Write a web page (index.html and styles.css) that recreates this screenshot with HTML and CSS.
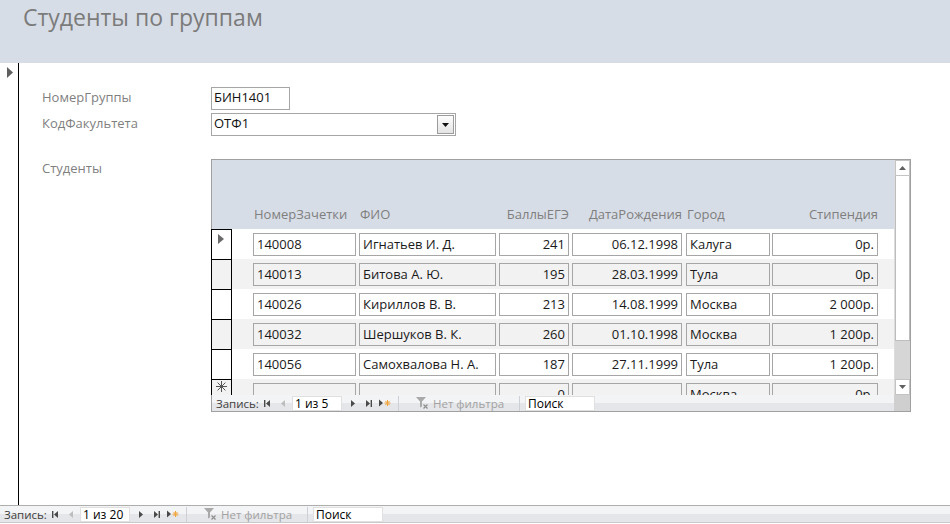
FILE: index.html
```html
<!DOCTYPE html>
<html lang="ru">
<head>
  <meta charset="UTF-8" />
  <title>Студенты по группам</title>
  <link rel="stylesheet" href="styles.css">
</head>
<body>
  <header class="form-header">
    <h1>Студенты по группам</h1>
  </header>

  <div class="form-body">
    <div class="record-selector">
      <svg class="current-mark" width="6" height="11" viewBox="0 0 6 11"><path d="M0 0L6 5.5L0 11Z" fill="#5f5f5f"/></svg>
    </div>

    <div class="detail">
      <div class="field-row">
        <label class="field-label">НомерГруппы</label>
        <div class="textbox group-box">БИН1401</div>
      </div>
      <div class="field-row row-gap">
        <label class="field-label">КодФакультета</label>
        <div class="textbox combo">
          <span>ОТФ1</span>
          <span class="combo-btn">
            <svg width="7" height="4" viewBox="0 0 7 4"><path d="M0 0H7L3.5 4Z" fill="#111"/></svg>
          </span>
        </div>
      </div>

      <div class="field-row subform-row">
        <label class="field-label">Студенты</label>

        <div class="subform">
          <div class="sheet">
            <div class="sheet-head">
              <div class="c-num">НомерЗачетки</div>
              <div class="c-fio">ФИО</div>
              <div class="c-ball right">БаллыЕГЭ</div>
              <div class="c-date right">ДатаРождения</div>
              <div class="c-city">Город</div>
              <div class="c-stip right">Стипендия</div>
            </div>

            <div class="sheet-row">
              <div class="rowsel">
                <svg width="6" height="10" viewBox="0 0 6 10"><path d="M0 0L6 5L0 10Z" fill="#6a6a6a"/></svg>
              </div>
              <div class="cell c-num">140008</div>
              <div class="cell c-fio">Игнатьев И. Д.</div>
              <div class="cell c-ball right">241</div>
              <div class="cell c-date right">06.12.1998</div>
              <div class="cell c-city">Калуга</div>
              <div class="cell c-stip right">0р.</div>
            </div>
            <div class="sheet-row alt">
              <div class="rowsel"></div>
              <div class="cell c-num">140013</div>
              <div class="cell c-fio">Битова А. Ю.</div>
              <div class="cell c-ball right">195</div>
              <div class="cell c-date right">28.03.1999</div>
              <div class="cell c-city">Тула</div>
              <div class="cell c-stip right">0р.</div>
            </div>
            <div class="sheet-row">
              <div class="rowsel"></div>
              <div class="cell c-num">140026</div>
              <div class="cell c-fio">Кириллов В. В.</div>
              <div class="cell c-ball right">213</div>
              <div class="cell c-date right">14.08.1999</div>
              <div class="cell c-city">Москва</div>
              <div class="cell c-stip right">2 000р.</div>
            </div>
            <div class="sheet-row alt">
              <div class="rowsel"></div>
              <div class="cell c-num">140032</div>
              <div class="cell c-fio">Шершуков В. К.</div>
              <div class="cell c-ball right">260</div>
              <div class="cell c-date right">01.10.1998</div>
              <div class="cell c-city">Москва</div>
              <div class="cell c-stip right">1 200р.</div>
            </div>
            <div class="sheet-row">
              <div class="rowsel"></div>
              <div class="cell c-num">140056</div>
              <div class="cell c-fio">Самохвалова Н. А.</div>
              <div class="cell c-ball right">187</div>
              <div class="cell c-date right">27.11.1999</div>
              <div class="cell c-city">Тула</div>
              <div class="cell c-stip right">1 200р.</div>
            </div>
            <!-- new record row, cut by the subform edge -->
            <div class="sheet-row alt">
              <div class="rowsel new-rec">
                <svg width="11" height="11" viewBox="0 0 11 11"><path d="M5.5 0V11M0 5.5H11M1.6 1.6L9.4 9.4M9.4 1.6L1.6 9.4" stroke="#555" stroke-width="1"/></svg>
              </div>
              <div class="cell c-num"></div>
              <div class="cell c-fio"></div>
              <div class="cell c-ball right">0</div>
              <div class="cell c-date right"></div>
              <div class="cell c-city">Москва</div>
              <div class="cell c-stip right">0р.</div>
            </div>
          </div>

          <div class="vscroll">
            <div class="scroll-btn">
              <svg width="7" height="4" viewBox="0 0 7 4"><path d="M0 4H7L3.5 0Z" fill="#606060"/></svg>
            </div>
            <div class="scroll-thumb"></div>
            <div class="scroll-track"></div>
            <div class="scroll-btn">
              <svg width="7" height="4" viewBox="0 0 7 4"><path d="M0 0H7L3.5 4Z" fill="#606060"/></svg>
            </div>
          </div>

          <div class="recnav sub-nav">
            <span class="nav-label">Запись:</span>
            <span class="nav-btn"><svg width="6" height="7" viewBox="0 0 6 7"><rect width="1.4" height="7" fill="#4a4a4a"/><path d="M6 0V7L2 3.5Z" fill="#4a4a4a"/></svg></span>
            <span class="nav-btn"><svg width="4" height="7" viewBox="0 0 4 7"><path d="M4 0V7L0 3.5Z" fill="#bdbdbd"/></svg></span>
            <span class="nav-box pos-box">1 из 5</span>
            <span class="nav-btn"><svg width="4" height="7" viewBox="0 0 4 7"><path d="M0 0V7L4 3.5Z" fill="#4a4a4a"/></svg></span>
            <span class="nav-btn"><svg width="6" height="7" viewBox="0 0 6 7"><path d="M0 0V7L4 3.5Z" fill="#4a4a4a"/><rect x="4.6" width="1.4" height="7" fill="#4a4a4a"/></svg></span>
            <span class="nav-btn"><svg width="12" height="8" viewBox="0 0 12 8"><path d="M0 0.5V7.5L4 4Z" fill="#4a4a4a"/><path d="M8.5 1V7M5.5 4H11.5M6.4 1.9L10.6 6.1M10.6 1.9L6.4 6.1" stroke="#f2a33a" stroke-width="1"/></svg></span>
            <span class="nav-sep"></span>
            <span class="nav-filter">
              <svg width="13" height="12" viewBox="0 0 13 12"><path d="M0 0H10L6 4.5V9.5L4 10.5V4.5Z" fill="#a9a9a9"/><path d="M7.5 7.5L11.5 11.5M11.5 7.5L7.5 11.5" stroke="#8f8f8f" stroke-width="1.2"/></svg>
              Нет фильтра
            </span>
            <span class="nav-sep"></span>
            <span class="nav-box search-box">Поиск</span>
          </div>
          <div class="corner"></div>
        </div>
      </div>
    </div>
  </div>

  <div class="recnav main-nav">
    <span class="nav-label">Запись:</span>
    <span class="nav-btn"><svg width="6" height="7" viewBox="0 0 6 7"><rect width="1.4" height="7" fill="#4a4a4a"/><path d="M6 0V7L2 3.5Z" fill="#4a4a4a"/></svg></span>
    <span class="nav-btn"><svg width="4" height="7" viewBox="0 0 4 7"><path d="M4 0V7L0 3.5Z" fill="#bdbdbd"/></svg></span>
    <span class="nav-box pos-box">1 из 20</span>
    <span class="nav-btn"><svg width="4" height="7" viewBox="0 0 4 7"><path d="M0 0V7L4 3.5Z" fill="#4a4a4a"/></svg></span>
    <span class="nav-btn"><svg width="6" height="7" viewBox="0 0 6 7"><path d="M0 0V7L4 3.5Z" fill="#4a4a4a"/><rect x="4.6" width="1.4" height="7" fill="#4a4a4a"/></svg></span>
    <span class="nav-btn"><svg width="12" height="8" viewBox="0 0 12 8"><path d="M0 0.5V7.5L4 4Z" fill="#4a4a4a"/><path d="M8.5 1V7M5.5 4H11.5M6.4 1.9L10.6 6.1M10.6 1.9L6.4 6.1" stroke="#f2a33a" stroke-width="1"/></svg></span>
    <span class="nav-sep"></span>
    <span class="nav-filter">
      <svg width="13" height="12" viewBox="0 0 13 12"><path d="M0 0H10L6 4.5V9.5L4 10.5V4.5Z" fill="#a9a9a9"/><path d="M7.5 7.5L11.5 11.5M11.5 7.5L7.5 11.5" stroke="#8f8f8f" stroke-width="1.2"/></svg>
      Нет фильтра
    </span>
    <span class="nav-sep"></span>
    <span class="nav-box search-box">Поиск</span>
  </div>
</body>
</html>
```

FILE: styles.css
```css
* {
  margin: 0;
  padding: 0;
  box-sizing: border-box;
}

body {
  width: 950px;
  height: 524px;
  overflow: hidden;
  display: flex;
  flex-direction: column;
  font-family: "Open Sans", "Noto Sans", sans-serif;
  font-size: 13px;
  color: #222;
  background: #fff;
}

/* form header band */
.form-header {
  height: 63px;
  flex: none;
  background-color: #d7dde6;
  padding: 1px 0 0 23px;
}
.form-header h1 {
  font-size: 23px;
  font-weight: 400;
  color: #7b7b7b;
}

.form-body {
  flex: 1;
  display: flex;
  min-height: 0;
}

.record-selector {
  width: 19px;
  flex: none;
  border-right: 1px solid #000;
}
.current-mark {
  display: block;
  margin: 4px 0 0 7px;
}

.detail {
  flex: 1;
  padding: 24px 0 0 23px;
}

.field-row {
  display: flex;
  align-items: center;
}
.row-gap {
  margin-top: 3px;
}
.field-label {
  width: 169px;
  flex: none;
  color: #7f7f7f;
  padding-bottom: 3px;
}

.textbox {
  height: 23px;
  border: 1px solid #a6a6a6;
  padding-left: 2px;
  line-height: 19px;
  color: #111;
  background: #fff;
}
.group-box {
  width: 79px;
}
.combo {
  width: 245px;
  display: flex;
  justify-content: space-between;
  padding-right: 1px;
}
.combo-btn {
  width: 17px;
  height: 19px;
  margin-top: 1px;
  border: 1px solid #9c9c9c;
  background: linear-gradient(#fdfdfd, #e4e4e4);
  display: flex;
  align-items: center;
  justify-content: center;
}

/* subform */
.subform-row {
  align-items: flex-start;
  margin-top: 23px;
}
.subform-row .field-label {
  padding-top: 0;
}

.subform {
  width: 700px;
  height: 253px;
  border: 1px solid #a0a0a0;
  border-left: none;
  display: grid;
  grid-template-columns: 683px 16px;
  grid-template-rows: 235px 16px;
}

.sheet {
  overflow: hidden;
}
.sheet-head {
  height: 69px;
  background-color: #d7dde6;
  border-left: 1px solid #a0a0a0;
  display: flex;
  align-items: flex-end;
  padding: 0 0 6px 20px;
  color: #7f7f7f;
  line-height: 18px;
}
.sheet-head > div {
  flex: none;
  padding: 0 1px;
}
.sheet-head .right {
  padding-right: 0;
}

.sheet-row {
  height: 30px;
  display: flex;
  align-items: flex-start;
  background: #fff;
}
.sheet-row.alt {
  background: #f2f2f2;
}
.rowsel {
  width: 21px;
  height: 30px;
  flex: none;
  border: 1px solid #000;
  border-bottom: none;
  padding: 4px 0 0 6px;
}
.rowsel svg {
  display: block;
}
.rowsel.new-rec {
  padding: 1px 0 0 4px;
}

.cell {
  height: 23px;
  margin-top: 4px;
  border: 1px solid #a6a6a6;
  padding: 0 3px;
  line-height: 20px;
  white-space: nowrap;
  overflow: hidden;
  color: #1a1a1a;
}
.right {
  text-align: right;
}

.c-num { width: 103px; margin-left: 21px; }
.c-fio { width: 137px; margin-left: 3px; }
.c-ball { width: 70px; margin-left: 3px; }
.c-date { width: 110px; margin-left: 3px; }
.c-city { width: 84px; margin-left: 4px; }
.c-stip { width: 106px; margin-left: 2px; }

.vscroll {
  display: flex;
  flex-direction: column;
  border-left: 1px solid #dcdcdc;
  background: #fff;
}
.scroll-btn {
  height: 16px;
  border: 1px solid #c4c4c4;
  display: flex;
  align-items: center;
  justify-content: center;
  background: #fff;
}
.scroll-thumb {
  height: 165px;
  border: 1px solid #bdbdbd;
  border-top: none;
  background: #fff;
}
.scroll-track {
  flex: 1;
  background: #d6d6d6;
}
.corner {
  background: #cfcfcf;
}

/* record navigation bars */
.recnav {
  display: flex;
  align-items: center;
  font-size: 11.5px;
  color: #3e3e3e;
  background: linear-gradient(#f3f4f6 0, #f3f4f6 50%, #e5e6e9 50%, #e5e6e9 100%);
  white-space: nowrap;
}
.main-nav {
  height: 18px;
  flex: none;
  margin-bottom: 1px;
  border-top: 1px solid #aeaeae;
  border-bottom: 1px solid #c9c9c9;
}
.sub-nav {
  border-left: 1px solid #a0a0a0;
}
.nav-label {
  width: 47px;
  padding-left: 4px;
}
.nav-btn {
  width: 16px;
  display: flex;
  justify-content: center;
}
.nav-box {
  height: 15px;
  line-height: 14px;
  font-size: 12px;
  background: #fff;
  color: #000;
  padding-left: 2px;
  border: 1px solid #e0e0e0;
}
.pos-box {
  width: 50px;
  margin: 0 3px 0 1px;
}
.nav-sep {
  width: 1px;
  height: 15px;
  background: #cdd0d6;
  margin-left: 5px;
}
.nav-filter {
  width: 120px;
  padding-left: 17px;
  font-size: 11.5px;
  color: #a2a2a2;
  display: flex;
  align-items: center;
  gap: 4px;
}
.nav-filter + .nav-sep {
  margin-left: 0;
}
.search-box {
  width: 70px;
  margin-left: 5px;
}
```
